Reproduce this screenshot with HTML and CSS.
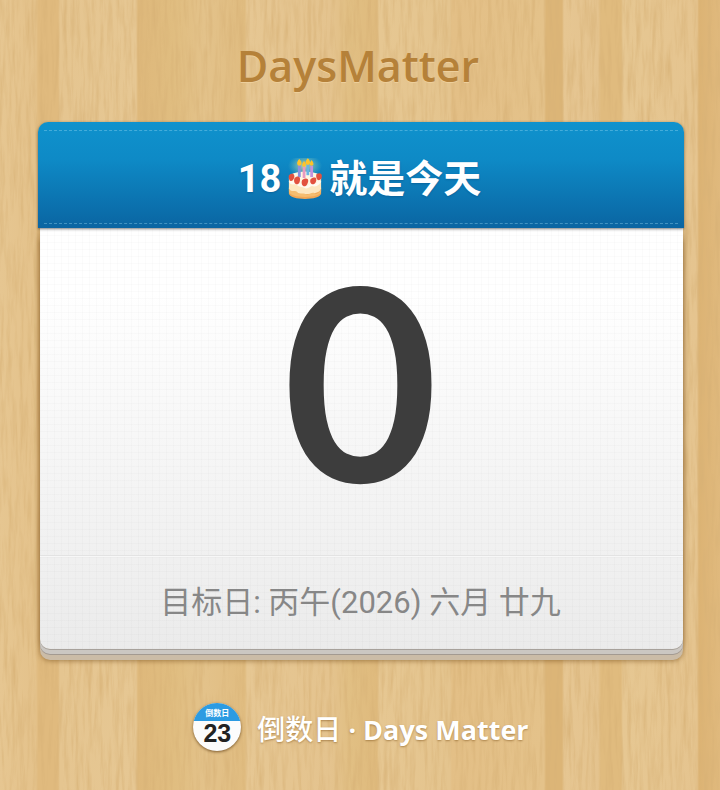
FILE: index.html
```
<!DOCTYPE html>
<html lang="zh-CN">
<head>
  <meta charset="UTF-8">
  <meta name="viewport" content="width=device-width, initial-scale=1">
  <title>DaysMatter</title>
  <link rel="stylesheet" href="styles.css">
</head>
<body>
  <svg class="wood" aria-hidden="true">
    <filter id="grain" x="0" y="0" width="100%" height="100%">
      <feTurbulence type="fractalNoise" baseFrequency="0.25 0.02" numOctaves="4" seed="7"/>
      <feColorMatrix values="0 0 0 0 0.68  0 0 0 0 0.44  0 0 0 0 0.18  1.5 0 0 0 -0.62"/>
    </filter>
    <rect width="100%" height="100%" filter="url(#grain)"/>
  </svg>

  <h1 class="brand">DaysMatter</h1>

  <main class="card">
    <h2 class="card-title">
      <span>18</span>
      <svg class="cake" viewBox="0 0 38 44" role="img" aria-label="cake">
        <defs>
          <radialGradient id="glow">
            <stop offset="0" stop-color="#ffe98a" stop-opacity="0.8"/>
            <stop offset="1" stop-color="#8fd0c0" stop-opacity="0"/>
          </radialGradient>
        </defs>
        <ellipse cx="19" cy="8" rx="18" ry="12" fill="url(#glow)"/>
        <path d="M2 31v6c0 8 34 8 34 0v-6z" fill="#f2a755"/>
        <path d="M2 21v11c0 8 34 8 34 0V21z" fill="#fde7c0"/>
        <path d="M2 32c3 5 6 1 9 4s6 0 9 2 6-3 9-1 5-1 7-5v3c0 8-34 8-34 0z" fill="#f5bd70"/>
        <ellipse cx="19" cy="21" rx="17" ry="7" fill="#fff7e2"/>
        <path d="M3 24c3 5 5 0 8 3s5 1 8 3 5-3 8-2 6-1 8-4" fill="none" stroke="#fffaf0" stroke-width="3"/>
        <g stroke-width="3">
          <path d="M13 7v13" stroke="#8c91df"/>
          <path d="M18 9v12" stroke="#e99ac0"/>
          <path d="M22 6v12" stroke="#69b5e3"/>
          <path d="M26 8v12" stroke="#c493dc"/>
        </g>
        <g fill="#ffc329">
          <path d="M13 1c4 4 2 7 0 7s-4-3 0-7z"/>
          <path d="M18 3c3 4 2 6 0 6s-3-2 0-6z"/>
          <path d="M22 0c4 4 2 7 0 7s-4-3 0-7z"/>
          <path d="M26 2c3 4 2 6 0 6s-3-2 0-6z"/>
        </g>
        <g fill="#e2513f">
          <path d="M2 18c5-4 7 0 5 4s-6 2-5-4z"/>
          <path d="M8 21c5-4 7 0 5 5-3 4-7 0-5-5z"/>
          <path d="M16 23c6-4 8 0 5 5-3 4-7 0-5-5z"/>
          <path d="M25 22c6-4 7 0 5 4-3 4-7 0-5-4z"/>
          <path d="M31 17c5-3 7 1 5 5-3 3-6 0-5-5z"/>
        </g>
      </svg>
      <span>就是今天</span>
    </h2>
    <div class="sheet">
      <p class="count">0</p>
      <p class="target">目标日: 丙午(2026) 六月 廿九</p>
    </div>
  </main>

  <footer class="footer">
    <div class="logo">
      <span class="logo-top">倒数日</span>
      <span class="logo-num">23</span>
    </div>
    <p class="app-name"><span class="app-cn">倒数日</span> <strong>· Days Matter</strong></p>
  </footer>
</body>
</html>
```
FILE: styles.css
```
* {
  box-sizing: border-box;
}
body {
  margin: 0;
  min-height: 100vh;
  padding: 40px 36px 32px 38px;
  font-family: Roboto, "Noto Sans CJK SC", sans-serif;
  background: #e3c28d;
  background-image: linear-gradient(90deg,
    #e6c691, #e4c28b 36px, #e0ba7e 38px 58px, #e5c590 60px, #e6c793 136px,
    #deb87b 138px, #e0bd80 175px, #e3c28a 205px, #e0bc80 245px, #e6c793 247px,
    #e4c38e 330px, #e1bf83 350px, #dfba7d 377px, #e6c792 379px, #e4c48e 450px,
    #e3bf86 452px, #e4c28a 544px, #dcb577 546px 562px, #e6c692 564px, #e4c38e 598px,
    #e0bb7e 601px 621px, #e6c792 623px, #e5c48f 697px, #dcb374 699px, #e0b97d 720px);
}
.wood {
  position: absolute;
  inset: 0;
  width: 100%;
  height: 100%;
  z-index: -1;
}
h1, h2, p {
  margin: 0;
}
.brand {
  padding-right: 6px;
  font: 600 43px/52px "Open Sans", sans-serif;
  text-align: center;
  color: #b58139;
  text-shadow: 0 1px 0 #edcf9c;
}

/* calendar page */
.card {
  margin-top: 30px;
}
.card-title {
  display: flex;
  justify-content: center;
  align-items: center;
  gap: 6px;
  position: relative;
  height: 106px;
  padding: 8px 3px 0 0;
  font-size: 38px;
  line-height: 48px;
  font-weight: bold;
  color: #fff;
  background: linear-gradient(#0f92cd, #0e8ac6 35%, #0a65a2);
  border-radius: 10px 10px 0 0;
  box-shadow: 0 1px 3px rgba(0, 0, 0, 0.5);
  text-shadow: 0 1px 2px rgba(0, 50, 100, 0.3);
}
.card-title::before,
.card-title::after {
  content: "";
  position: absolute;
  left: 6px;
  right: 6px;
  border-top: 1px dashed rgba(150, 215, 240, 0.4);
}
.card-title::before {
  top: 8px;
}
.card-title::after {
  bottom: 4px;
}
.cake {
  width: 36px;
  height: 42px;
}
.sheet {
  margin: 0 1px 0 2px;
  text-align: center;
  background:
    repeating-linear-gradient(90deg, rgba(0, 0, 0, 0.015) 0 1px, transparent 1px 7px),
    repeating-linear-gradient(rgba(0, 0, 0, 0.015) 0 1px, transparent 1px 7px),
    linear-gradient(#fff 15%, #ebebeb);
  border-radius: 0 0 10px 10px;
  box-shadow: 0 1px 0 #a7a19b, 0 5px 0 #cbc7c2, 0 6px 0 #a39a91, 0 11px 0 #cbbca7,
    0 12px 5px rgba(100, 60, 10, 0.5), 0 2px 6px rgba(100, 60, 10, 0.4);
}
.count {
  height: 328px;
  padding-right: 2px;
  font: bold 268px/300px Lato, sans-serif;
  color: #3d3d3d;
  border-bottom: 1px solid #e3e3e3;
}
.target {
  padding: 26px 2px 26px 0;
  font-size: 31px;
  line-height: 40px;
  font-weight: normal;
  color: #878787;
  border-top: 1px solid #f7f7f7;
}

.footer {
  display: flex;
  justify-content: center;
  align-items: center;
  gap: 16px;
  margin-top: 54px;
  color: #fff;
}
.logo {
  display: flex;
  flex-direction: column;
  width: 48px;
  height: 48px;
  overflow: hidden;
  text-align: center;
  background: #fcfcfc;
  border-radius: 50%;
  box-shadow: 0 1px 3px rgba(80, 45, 5, 0.7);
}
.logo-top {
  height: 18px;
  padding-top: 6px;
  font-size: 8px;
  line-height: 10px;
  font-weight: bold;
  background: #2c9be2;
}
.logo-num {
  font: bold 25px/25px "Liberation Sans", sans-serif;
  color: #222;
}
.app-name {
  padding-top: 4px;
  font: 27px/40px "Open Sans", "Noto Sans CJK SC", sans-serif;
  text-shadow: 0 1px 2px rgba(120, 75, 20, 0.5);
}
.app-cn {
  font-size: 28px;
  font-weight: 500;
}
```
